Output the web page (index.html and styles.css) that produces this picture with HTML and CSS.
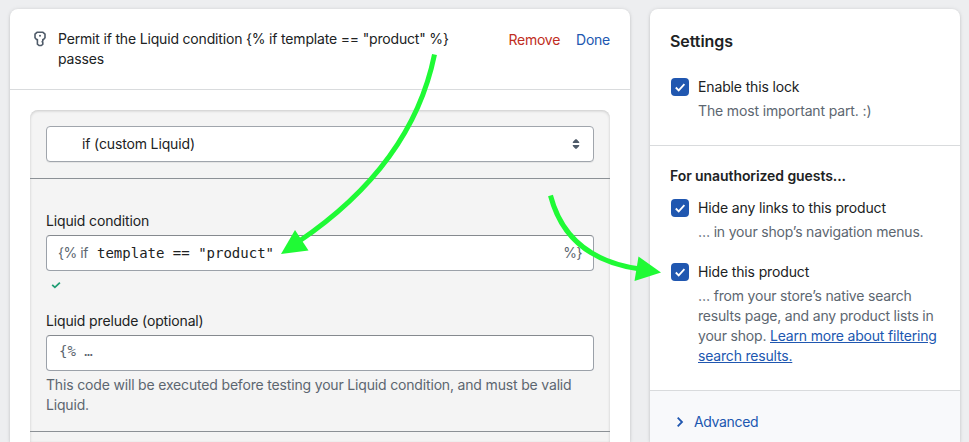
FILE: index.html
```html
<!DOCTYPE html>
<html lang="en">
<head>
<meta charset="utf-8">
<title>Lock settings</title>
<link rel="stylesheet" href="styles.css">
</head>
<body>
<main class="page">
  <section class="card editor">
    <header class="editor-head">
      <svg class="key" width="20" height="20" viewBox="0 0 20 20" fill="none" stroke="#4f5b69" stroke-width="1.6" stroke-linejoin="round"><path d="M7.400 10.500H6.500L5 8.700V5.200L7 3.300H13L15 5.200V8.700L13.500 10.500H12.800V12L12.200 12.800L12.800 13.600V15.300L11.300 16.500H9L7.400 15.200Z"/><circle cx="10" cy="6.800" r="1" fill="#4f5b69" stroke="none"/></svg>
      <p class="summary">Permit if the Liquid condition {% if template == "product" %} passes</p>
      <nav class="actions"><a class="remove">Remove</a><a class="done">Done</a></nav>
    </header>
    <div class="rule-box">
      <div class="rule-type">
        <div class="field select"><span>if (custom Liquid)</span>
          <svg width="20" height="20" viewBox="0 0 20 20" fill="#4f5b69"><path d="M6.800 9h6.400v-1L10.600 5.200h-1.200L6.800 8zM6.800 11h6.400v1l-2.600 2.800h-1.200L6.800 12z"/></svg>
        </div>
      </div>
      <div class="rule-body">
        <label class="label">Liquid condition</label>
        <div class="field condition"><span class="affix">{% if</span><code>template == "product"</code><span class="affix end">%}</span></div>
        <div class="valid"><svg width="12" height="12" viewBox="0 0 12 12" fill="none" stroke="#1f9d73" stroke-width="1.800"><path d="M2.200 5.800l2.700 2.500 5-4.700"/></svg></div>
        <label class="label">Liquid prelude (optional)</label>
        <div class="field prelude"><code>{% …</code></div>
        <p class="help">This code will be executed before testing your Liquid condition, and must be valid Liquid.</p>
      </div>
    </div>
  </section>

  <aside class="card settings">
    <section class="group first">
      <h2>Settings</h2>
      <div class="option"><span class="check"><svg width="18" height="18" viewBox="0 0 18 18"><path d="M4.800 9.500l2.900 2.900 5.700-6.200"/></svg></span>
        <div><p class="name">Enable this lock</p><p class="desc important">The most important part. :)</p></div></div>
    </section>
    <section class="group second">
      <h3>For unauthorized guests...</h3>
      <div class="option"><span class="check"><svg width="18" height="18" viewBox="0 0 18 18"><path d="M4.800 9.500l2.900 2.900 5.700-6.200"/></svg></span>
        <div><p class="name">Hide any links to this product</p><p class="desc">… in your shop’s navigation menus.</p></div></div>
      <div class="option"><span class="check"><svg width="18" height="18" viewBox="0 0 18 18"><path d="M4.800 9.500l2.900 2.900 5.700-6.200"/></svg></span>
        <div><p class="name">Hide this product</p><p class="desc">… from your store’s native search<br>results page, and any product lists in<br>your shop. <a>Learn more about filtering<br>search results.</a></p></div></div>
    </section>
    <section class="advanced">
      <svg width="20" height="20" viewBox="0 0 20 20" fill="none" stroke="#2057b0" stroke-width="1.800"><path d="M7.700 5.600l4.300 4.400-4.300 4.400"/></svg>
      <span>Advanced</span>
    </section>
  </aside>
</main>
<svg class="arrows" width="969" height="442" viewBox="0 0 969 442">
  <g fill="none" stroke="#1ffa35" stroke-width="5"><path d="M434.500 54.500Q412 165 298 242"/><path d="M550.500 195.500Q567 259 640 269"/></g>
  <g fill="#1ffa35"><path d="M281 254L295 230L308.500 250.500Z"/><path d="M661 272.500L638.500 256.500L634.500 281Z"/></g>
</svg>
</body>
</html>
```

FILE: styles.css
```css
* { box-sizing: border-box; }
body {
  margin: 0;
  height: 442px;
  overflow: hidden;
  background: #edeef0;
  color: #202223;
  font: 14px/20px Inter, "Liberation Sans", sans-serif;
  letter-spacing: -.14px;
}
p, h2, h3 { margin: 0; }
.page {
  display: grid;
  grid-template-columns: 620px 310px;
  gap: 20px;
  height: 442px;
  padding: 9px 0 0 10px;
}
.card {
  display: flex;
  flex-direction: column;
  height: 433px;
  overflow: hidden;
  background: #fff;
  border-radius: 8px 8px 0 0;
  box-shadow: 0 0 5px rgba(23, 24, 24, .07), 0 1px 3px rgba(0, 0, 0, .14);
}
.editor-head {
  display: flex;
  flex: none;
  height: 81px;
  padding: 20px;
  border-bottom: 1px solid #d9dbdd;
}
.key { flex: none; margin-right: 8px; }
.summary { width: 410px; letter-spacing: -.175px; }
.actions {
  display: flex;
  gap: 16px;
  margin-left: auto;
  padding-top: 1px;
  letter-spacing: -.25px;
}
.remove { color: #c02d22; }
.done, .desc a { color: #2057b0; }
.rule-box {
  flex: 1;
  min-height: 0;
  margin: 20px 20px 0;
  background: #f4f4f4;
  border-radius: 8px 8px 0 0;
  box-shadow: inset 0 1px 3px rgba(0, 0, 0, .18);
}
.rule-type {
  height: 69px;
  padding: 16px;
  border-bottom: 1px solid #8c9196;
}
.rule-body {
  height: 253px;
  padding: 32px 16px 0;
  border-bottom: 1px solid #8c9196;
}
.field {
  display: flex;
  align-items: center;
  height: 36px;
  background: #fff;
  border: 1px solid #9ba1a9;
  border-top-color: #85898e;
  border-radius: 4px;
}
.select {
  justify-content: space-between;
  padding: 0 7px 0 35px;
  border-color: #a0a5ac;
  box-shadow: 0 1px 0 rgba(0, 0, 0, .06);
}
.label { display: block; margin-bottom: 4px; }
code { font: 14px/20px "DejaVu Sans Mono", monospace; letter-spacing: 0; }
.condition { padding: 0 11px; }
.condition code { margin-left: 9px; }
.affix { color: #5c6670; letter-spacing: -.45px; }
.end { margin-left: auto; }
.valid { height: 40px; padding: 8px 4px; }
.valid svg { display: block; }
.prelude { padding: 0 12px; }
.prelude code { padding-bottom: 4px; color: #5c6670; }
.help { margin-top: 4px; color: #5c6670; letter-spacing: -.17px; }
.group { flex: none; padding: 20px; border-bottom: 1px solid #d9dbdd; }
.first { height: 137px; }
.second { height: 245px; }
h2 {
  margin: 0 0 24px;
  font-size: 16px;
  line-height: 24px;
  font-weight: 600;
  letter-spacing: -.05px;
}
h3 {
  margin-bottom: 12px;
  font-size: 14px;
  line-height: 20px;
  font-weight: 600;
  letter-spacing: -.08px;
}
.option { display: flex; margin-bottom: 20px; }
.check {
  flex: none;
  width: 18px;
  height: 18px;
  margin: 1px 9px 0 1px;
  background: #2057b0;
  border-radius: 4px;
}
.check svg {
  display: block;
  fill: none;
  stroke: #fff;
  stroke-width: 1.8;
}
.desc {
  margin-top: 4px;
  color: #5c6670;
  letter-spacing: -.19px;
  white-space: nowrap;
}
.important { letter-spacing: -.14px; }
.desc a { text-decoration: underline; }
.advanced {
  display: flex;
  flex: 1;
  gap: 4px;
  min-height: 0;
  padding: 21px 20px 0;
  background: #f8f9fb;
  color: #2057b0;
  letter-spacing: -.35px;
}
.arrows { position: absolute; top: 0; left: 0; }
```
